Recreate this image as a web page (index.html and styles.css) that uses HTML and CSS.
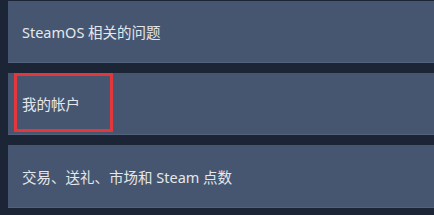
FILE: index.html
```html
<!DOCTYPE html>
<html lang="zh-CN">
<head>
    <meta charset="UTF-8">
    <meta name="viewport" content="width=device-width, initial-scale=1.0">
    <title>Steam 客服</title>
    <link rel="stylesheet" href="styles.css">
</head>
<body>
    <div class="help-list">
        <a class="help-item" href="#">SteamOS 相关的问题</a>
        <a class="help-item marked" href="#">我的帐户</a>
        <a class="help-item" href="#">交易、送礼、市场和 Steam 点数</a>
    </div>
</body>
</html>
```

FILE: styles.css
```css
body {
    margin: 0;
    background-color: #1b2536;
    font-family: "Noto Sans", "Noto Sans CJK SC", sans-serif;
    color: #e4e8ec;
}

.help-list {
    display: flex;
    flex-direction: column;
    gap: 10px;
    padding: 1px 0 0 8px;
}

.help-item {
    display: flex;
    align-items: center;
    height: 62px;
    padding-left: 14px;
    background-color: #465670;
    border-bottom: 1px solid #52627b;
    box-sizing: border-box;
    color: #e4e8ec;
    text-decoration: none;
    font-size: 14.5px;
}

.help-item:nth-child(3) {
    height: 63px;
}

/* red annotation box around "我的帐户" */
.marked {
    position: relative;
}

.marked::before {
    content: "";
    position: absolute;
    left: 6px;
    top: 0;
    width: 93px;
    height: 53px;
    border: 3px solid #e2383d;
}
```
